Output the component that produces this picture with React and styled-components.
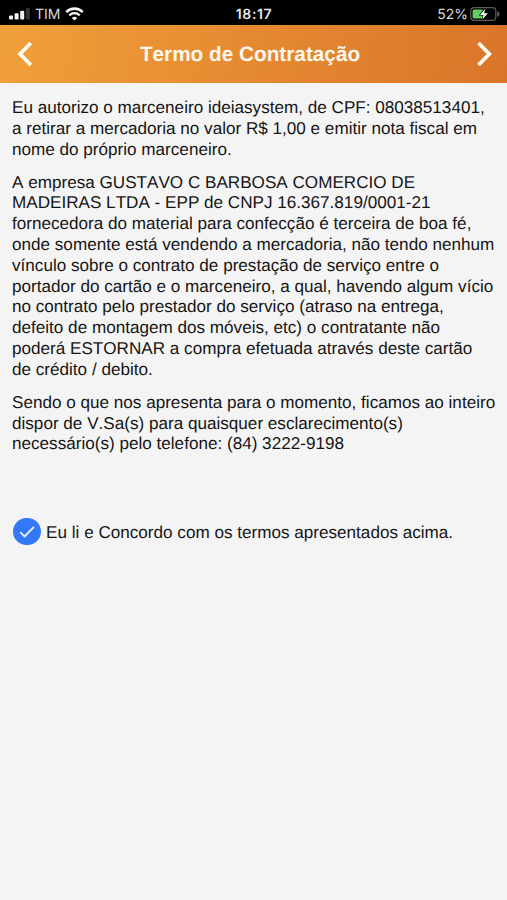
import React, { useState } from "react";
import styled, { createGlobalStyle } from "styled-components";

const GlobalStyle = createGlobalStyle`
  body {
    margin: 0;
    background: #f4f4f4;
    font-family: "Liberation Sans", Arial, sans-serif;
    font-kerning: none;
    text-rendering: geometricPrecision;
  }
`;

const Screen = styled.div`
  min-height: 900px;
  background: #f4f4f4;
  color: #141414;
`;

const StatusBar = styled.div`
  display: grid;
  grid-template-columns: 1fr auto 1fr;
  align-items: center;
  height: 25px;
  padding: 3px 7px 0 9px;
  box-sizing: border-box;
  background: #000;
  color: #d8d8d8;
  font-family: Inter, sans-serif;
  font-size: 14px;
`;

const StatusGroup = styled.div`
  display: flex;
  align-items: center;
  justify-content: ${(props) => (props.$end ? "flex-end" : "flex-start")};
  gap: ${(props) => (props.$end ? "2px" : "5px")};
`;

const Clock = styled.span`
  margin-right: 1px;
  font-size: 14px;
  font-weight: 600;
  letter-spacing: 0.6px;
  color: #e6e6e6;
`;

const Header = styled.header`
  display: flex;
  align-items: center;
  justify-content: space-between;
  height: 58px;
  padding: 0 13px 0 15px;
  box-sizing: border-box;
  background: linear-gradient(100deg, #f0a03a 0%, #e58931 50%, #d9752a 100%);
`;

const Title = styled.h1`
  margin: 0 9px 0 0;
  padding-top: 2px;
  font-size: 20.75px;
  font-weight: bold;
  line-height: 56px;
  color: #fff8ee;
`;

const NavButton = styled.button`
  display: flex;
  padding: 0;
  border: 0;
  background: none;
`;

const Content = styled.main`
  padding: 15px 0 0 12px;
`;

const Paragraph = styled.p`
  margin: 0 0 12.4px;
  font-size: 17.12px;
  line-height: 20.76px;
  white-space: nowrap;
`;

const Agreement = styled.label`
  display: flex;
  align-items: center;
  gap: 5.5px;
  margin: 61px 0 0 1.3px;
  font-size: 17.12px;
  line-height: 28px;
`;

const HiddenInput = styled.input`
  display: none;
`;

const Check = styled.span`
  display: flex;
  align-items: center;
  justify-content: center;
  width: 27.3px;
  height: 27.3px;
  border-radius: 50%;
  background: ${(props) => (props.$checked ? "#3478f6" : "#c7c7cc")};
`;

const AgreementText = styled.span`
  padding-top: 3px;
`;

const SignalIcon = () => (
  <svg width="21" height="12" viewBox="0 0 21 12">
    <rect x="0" y="7.5" width="4" height="4" rx="1" fill="#f2f2f2" />
    <rect x="5.6" y="5.3" width="4" height="6.2" rx="1" fill="#f2f2f2" />
    <rect x="11.2" y="2.7" width="4" height="8.8" rx="1" fill="#f2f2f2" />
    <rect x="16.8" y="0" width="4" height="11.5" rx="1" fill="#343434" />
  </svg>
);

const WifiIcon = () => (
  <svg width="19" height="14" viewBox="0 0 19 14" fill="none" stroke="#f4f4f4">
    <path d="M1.2 5.1C5.8 .5 13.2 .5 17.8 5.1" strokeWidth="2.6" />
    <path d="M4.3 8.3C7.2 5.5 11.8 5.5 14.7 8.3" strokeWidth="2.3" />
    <path d="M9.5 13.6 6.8 10.9C8.3 9.5 10.7 9.5 12.2 10.9Z" fill="#f4f4f4" stroke="none" />
  </svg>
);

const BatteryIcon = () => (
  <svg width="30" height="14" viewBox="0 0 30 14">
    <rect x="0.8" y="0.7" width="25" height="12.6" rx="3.4" fill="none" stroke="#5c5c5c" strokeWidth="1.2" />
    <path d="M27.2 4.3c1.6.5 2.3 1.5 2.3 2.7s-.7 2.2-2.3 2.7z" fill="#5c5c5c" />
    <rect x="2.6" y="2.5" width="10.5" height="9" rx="1.6" fill="#5fce61" />
    <path
      d="M15.4 1.4 10 7.9h3.6l-1.2 4.7 5.4-6.4h-3.7z"
      fill="#fff"
      stroke="#000"
      strokeWidth="1.2"
      paintOrder="stroke"
    />
  </svg>
);

const Chevron = ({ d }) => (
  <svg width="18" height="26" viewBox="0 0 18 26" fill="none">
    <path d={d} stroke="#fffaf2" strokeWidth="3.8" strokeLinejoin="miter" strokeLinecap="butt" />
  </svg>
);

const App = () => {
  const [accepted, setAccepted] = useState(true);

  return (
    <Screen>
      <GlobalStyle />
      <StatusBar>
        <StatusGroup>
          <SignalIcon />
          <span>TIM</span>
          <WifiIcon />
        </StatusGroup>
        <Clock>18:17</Clock>
        <StatusGroup $end>
          <span>52%</span>
          <BatteryIcon />
        </StatusGroup>
      </StatusBar>
      <Header>
        <NavButton aria-label="Voltar">
          <Chevron d="M15.8 2 5 13l10.8 11" />
        </NavButton>
        <Title>Termo de Contratação</Title>
        <NavButton aria-label="Avançar">
          <Chevron d="M2.5 2 13.3 13 2.5 24" />
        </NavButton>
      </Header>
      <Content>
        <Paragraph>
          Eu autorizo o marceneiro ideiasystem, de CPF: 08038513401,
          <br />
          a retirar a mercadoria no valor R$ 1,00 e emitir nota fiscal em
          <br />
          nome do próprio marceneiro.
        </Paragraph>
        <Paragraph>
          A empresa GUSTAVO C BARBOSA COMERCIO DE
          <br />
          MADEIRAS LTDA - EPP de CNPJ 16.367.819/0001-21
          <br />
          fornecedora do material para confecção é terceira de boa fé,
          <br />
          onde somente está vendendo a mercadoria, não tendo nenhum
          <br />
          vínculo sobre o contrato de prestação de serviço entre o
          <br />
          portador do cartão e o marceneiro, a qual, havendo algum vício
          <br />
          no contrato pelo prestador do serviço (atraso na entrega,
          <br />
          defeito de montagem dos móveis, etc) o contratante não
          <br />
          poderá ESTORNAR a compra efetuada através deste cartão
          <br />
          de crédito / debito.
        </Paragraph>
        <Paragraph>
          Sendo o que nos apresenta para o momento, ficamos ao inteiro
          <br />
          dispor de V.Sa(s) para quaisquer esclarecimento(s)
          <br />
          necessário(s) pelo telefone: (84) 3222-9198
        </Paragraph>
        <Agreement>
          <HiddenInput
            type="checkbox"
            checked={accepted}
            onChange={(e) => setAccepted(e.target.checked)}
          />
          <Check $checked={accepted}>
            <svg width="16" height="12" viewBox="0 0 16 12" fill="none">
              <path d="M1.2 6.2 5.6 10.4 14.8 1" stroke="#e6effd" strokeWidth="1.8" />
            </svg>
          </Check>
          <AgreementText>Eu li e Concordo com os termos apresentados acima.</AgreementText>
        </Agreement>
      </Content>
    </Screen>
  );
};

export default App;
